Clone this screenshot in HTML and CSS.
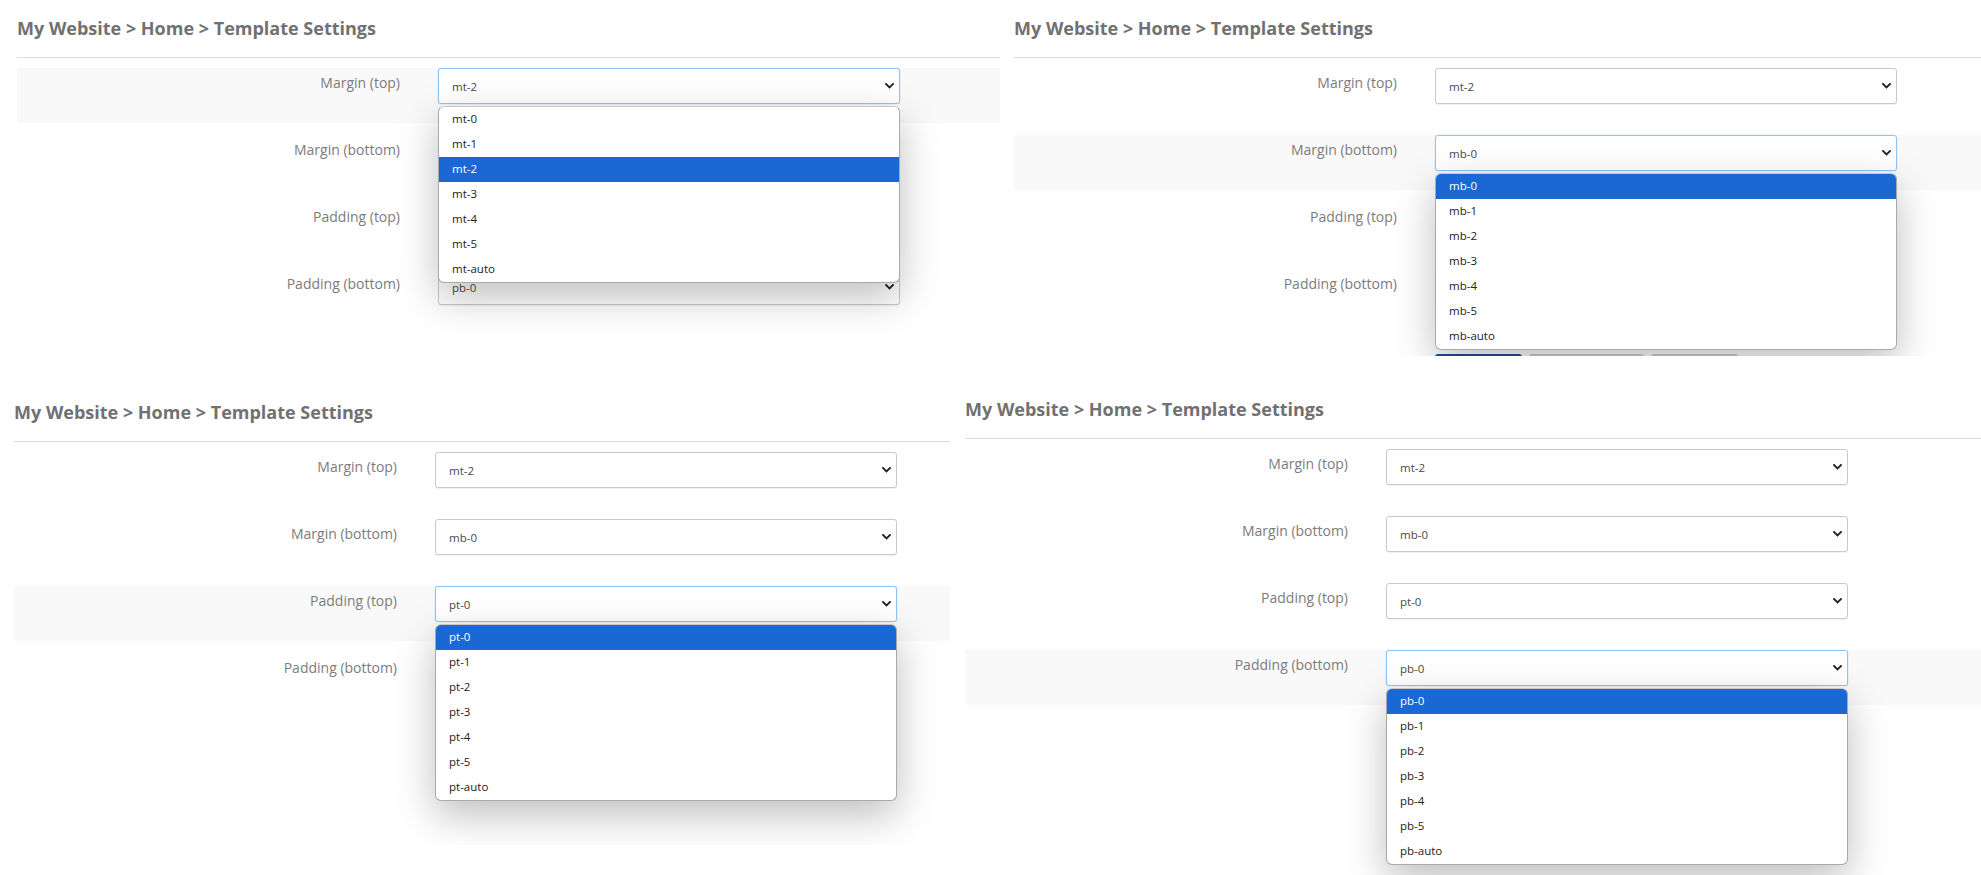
FILE: index.html
```html
<!DOCTYPE html>
<html lang="en">
<head>
<meta charset="utf-8">
<title>Template Settings</title>
<link rel="stylesheet" href="styles.css">
</head>
<body>
<div class="collage">
  <div class="strip strip-top">
    <section class="shot shot-a">
      <div class="page">
        <h1 class="crumbs">My Website &gt; Home &gt; Template Settings</h1>
        <div class="rule"></div>
        <div class="form">
          <div class="row active">
            <span class="lbl">Margin (top)</span>
            <div class="field">
              <div class="select focus"><span>mt-2</span><svg class="chev" viewBox="0 0 9 6"><path d="M1 1l3.5 3.5L8 1"/></svg></div>
              <ul class="menu">
                <li>mt-0</li><li>mt-1</li><li class="hl">mt-2</li><li>mt-3</li><li>mt-4</li><li>mt-5</li><li>mt-auto</li>
              </ul>
            </div>
          </div>
          <div class="row">
            <span class="lbl">Margin (bottom)</span>
            <div class="field"><div class="select"><span>mb-0</span><svg class="chev" viewBox="0 0 9 6"><path d="M1 1l3.5 3.5L8 1"/></svg></div></div>
          </div>
          <div class="row">
            <span class="lbl">Padding (top)</span>
            <div class="field"><div class="select"><span>pt-0</span><svg class="chev" viewBox="0 0 9 6"><path d="M1 1l3.5 3.5L8 1"/></svg></div></div>
          </div>
          <div class="row">
            <span class="lbl">Padding (bottom)</span>
            <div class="field"><div class="select"><span>pb-0</span><svg class="chev" viewBox="0 0 9 6"><path d="M1 1l3.5 3.5L8 1"/></svg></div></div>
          </div>
        </div>
        <div class="actions"><span class="btn btn-save"></span><span class="btn btn-alt btn-wide"></span><span class="btn btn-alt"></span></div>
      </div>
    </section>

    <section class="shot shot-b">
      <div class="page">
        <h1 class="crumbs">My Website &gt; Home &gt; Template Settings</h1>
        <div class="rule"></div>
        <div class="form">
          <div class="row">
            <span class="lbl">Margin (top)</span>
            <div class="field"><div class="select"><span>mt-2</span><svg class="chev" viewBox="0 0 9 6"><path d="M1 1l3.5 3.5L8 1"/></svg></div></div>
          </div>
          <div class="row active">
            <span class="lbl">Margin (bottom)</span>
            <div class="field">
              <div class="select focus"><span>mb-0</span><svg class="chev" viewBox="0 0 9 6"><path d="M1 1l3.5 3.5L8 1"/></svg></div>
              <ul class="menu">
                <li class="hl">mb-0</li><li>mb-1</li><li>mb-2</li><li>mb-3</li><li>mb-4</li><li>mb-5</li><li>mb-auto</li>
              </ul>
            </div>
          </div>
          <div class="row">
            <span class="lbl">Padding (top)</span>
            <div class="field"><div class="select"><span>pt-0</span><svg class="chev" viewBox="0 0 9 6"><path d="M1 1l3.5 3.5L8 1"/></svg></div></div>
          </div>
          <div class="row">
            <span class="lbl">Padding (bottom)</span>
            <div class="field"><div class="select"><span>pb-0</span><svg class="chev" viewBox="0 0 9 6"><path d="M1 1l3.5 3.5L8 1"/></svg></div></div>
          </div>
        </div>
        <div class="actions"><span class="btn btn-save"></span><span class="btn btn-alt btn-wide"></span><span class="btn btn-alt"></span></div>
      </div>
    </section>
  </div>

  <div class="strip strip-bottom">
    <section class="shot shot-c">
      <div class="page">
        <h1 class="crumbs">My Website &gt; Home &gt; Template Settings</h1>
        <div class="rule"></div>
        <div class="form">
          <div class="row">
            <span class="lbl">Margin (top)</span>
            <div class="field"><div class="select"><span>mt-2</span><svg class="chev" viewBox="0 0 9 6"><path d="M1 1l3.5 3.5L8 1"/></svg></div></div>
          </div>
          <div class="row">
            <span class="lbl">Margin (bottom)</span>
            <div class="field"><div class="select"><span>mb-0</span><svg class="chev" viewBox="0 0 9 6"><path d="M1 1l3.5 3.5L8 1"/></svg></div></div>
          </div>
          <div class="row active">
            <span class="lbl">Padding (top)</span>
            <div class="field">
              <div class="select focus"><span>pt-0</span><svg class="chev" viewBox="0 0 9 6"><path d="M1 1l3.5 3.5L8 1"/></svg></div>
              <ul class="menu">
                <li class="hl">pt-0</li><li>pt-1</li><li>pt-2</li><li>pt-3</li><li>pt-4</li><li>pt-5</li><li>pt-auto</li>
              </ul>
            </div>
          </div>
          <div class="row">
            <span class="lbl">Padding (bottom)</span>
            <div class="field"><div class="select"><span>pb-0</span><svg class="chev" viewBox="0 0 9 6"><path d="M1 1l3.5 3.5L8 1"/></svg></div></div>
          </div>
        </div>
        <div class="actions"><span class="btn btn-save"></span><span class="btn btn-alt btn-wide"></span><span class="btn btn-alt"></span></div>
      </div>
    </section>

    <section class="shot shot-d">
      <div class="page">
        <h1 class="crumbs">My Website &gt; Home &gt; Template Settings</h1>
        <div class="rule"></div>
        <div class="form">
          <div class="row">
            <span class="lbl">Margin (top)</span>
            <div class="field"><div class="select"><span>mt-2</span><svg class="chev" viewBox="0 0 9 6"><path d="M1 1l3.5 3.5L8 1"/></svg></div></div>
          </div>
          <div class="row">
            <span class="lbl">Margin (bottom)</span>
            <div class="field"><div class="select"><span>mb-0</span><svg class="chev" viewBox="0 0 9 6"><path d="M1 1l3.5 3.5L8 1"/></svg></div></div>
          </div>
          <div class="row">
            <span class="lbl">Padding (top)</span>
            <div class="field"><div class="select"><span>pt-0</span><svg class="chev" viewBox="0 0 9 6"><path d="M1 1l3.5 3.5L8 1"/></svg></div></div>
          </div>
          <div class="row active">
            <span class="lbl">Padding (bottom)</span>
            <div class="field">
              <div class="select focus"><span>pb-0</span><svg class="chev" viewBox="0 0 9 6"><path d="M1 1l3.5 3.5L8 1"/></svg></div>
              <ul class="menu">
                <li class="hl">pb-0</li><li>pb-1</li><li>pb-2</li><li>pb-3</li><li>pb-4</li><li>pb-5</li><li>pb-auto</li>
              </ul>
            </div>
          </div>
        </div>
        <div class="actions"><span class="btn btn-save"></span><span class="btn btn-alt btn-wide"></span><span class="btn btn-alt"></span></div>
      </div>
    </section>
  </div>
</div>
</body>
</html>
```

FILE: styles.css
```css
* { box-sizing: border-box; }

html, body {
  margin: 0;
  padding: 0;
  background: #ffffff;
}

body {
  width: 1981px;
  height: 875px;
  overflow: hidden;
  font-family: "Open Sans", "Noto Sans", "Liberation Sans", sans-serif;
}

.collage {
  display: flex;
  flex-direction: column;
  width: 1981px;
  height: 875px;
}

.strip {
  display: flex;
  align-items: flex-start;
}

.strip-top { height: 380px; }
.strip-bottom { height: 495px; }

.shot {
  overflow: hidden;
  background: #ffffff;
  flex: none;
}

.shot-a { width: 1000px; height: 333px; padding: 16px 0 0 17px; }
.shot-b { width: 981px; height: 356px; padding: 16px 0 0 14px; }
.shot-c { width: 950px; height: 465px; padding: 20px 0 0 14px; margin-right: 10px; }
.shot-d { width: 1021px; height: 495px; padding: 17px 0 0 5px; }

.page {
  width: 100%;
}

.crumbs {
  margin: 0 0 17px 0;
  height: 24px;
  font-size: 18px;
  line-height: 24px;
  font-weight: 700;
  color: #717171;
  white-space: nowrap;
}

.rule {
  height: 1px;
  background: #dedede;
}

.form {
  padding-top: 10px;
}

.row {
  display: flex;
  height: 55px;
  margin-bottom: 12px;
}

.row.active {
  background: #f9f9f9;
}

.lbl {
  width: 383px;
  flex: none;
  text-align: right;
  padding-top: 6px;
  font-size: 14px;
  line-height: 18px;
  color: #7c7c7c;
}

.field {
  position: relative;
  width: 462px;
  flex: none;
  margin-left: 38px;
}

.select {
  display: flex;
  align-items: center;
  justify-content: space-between;
  height: 36px;
  padding: 0 5px 0 13px;
  background: #ffffff;
  border: 1px solid #c9c9c9;
  border-radius: 3px;
  box-shadow: 0 1px 1px rgba(0, 0, 0, 0.06);
  font-size: 11.5px;
  color: #4a4a4a;
}

.select.focus {
  border-color: #8ec5f6;
  box-shadow: 0 0 2px rgba(100, 170, 240, 0.35);
}

.chev {
  width: 9px;
  height: 6px;
  fill: none;
  stroke: #222222;
  stroke-width: 1.9;
  stroke-linecap: square;
}

.menu {
  position: absolute;
  z-index: 5;
  top: 38px;
  left: 0;
  width: 462px;
  margin: 0;
  padding: 0;
  list-style: none;
  background: #ffffff;
  border: 1px solid #a9a9a9;
  border-top-color: #c8c8c8;
  border-radius: 6px;
  overflow: hidden;
  box-shadow: 0 14px 40px rgba(0, 0, 0, 0.26);
}

.menu li {
  height: 25px;
  line-height: 24px;
  padding-left: 13px;
  font-size: 11.5px;
  color: #222222;
}

.menu li.hl {
  background: #1a68d3;
  color: #ffffff;
}

.actions {
  display: flex;
  gap: 7px;
  padding: 18px 0 0 421px;
}

.btn {
  display: block;
  width: 87px;
  height: 37px;
  border-radius: 3px;
  background: #1e4f8f;
}

.btn-alt {
  background: #cfcfcf;
}

.btn-wide { width: 115px; }
```
